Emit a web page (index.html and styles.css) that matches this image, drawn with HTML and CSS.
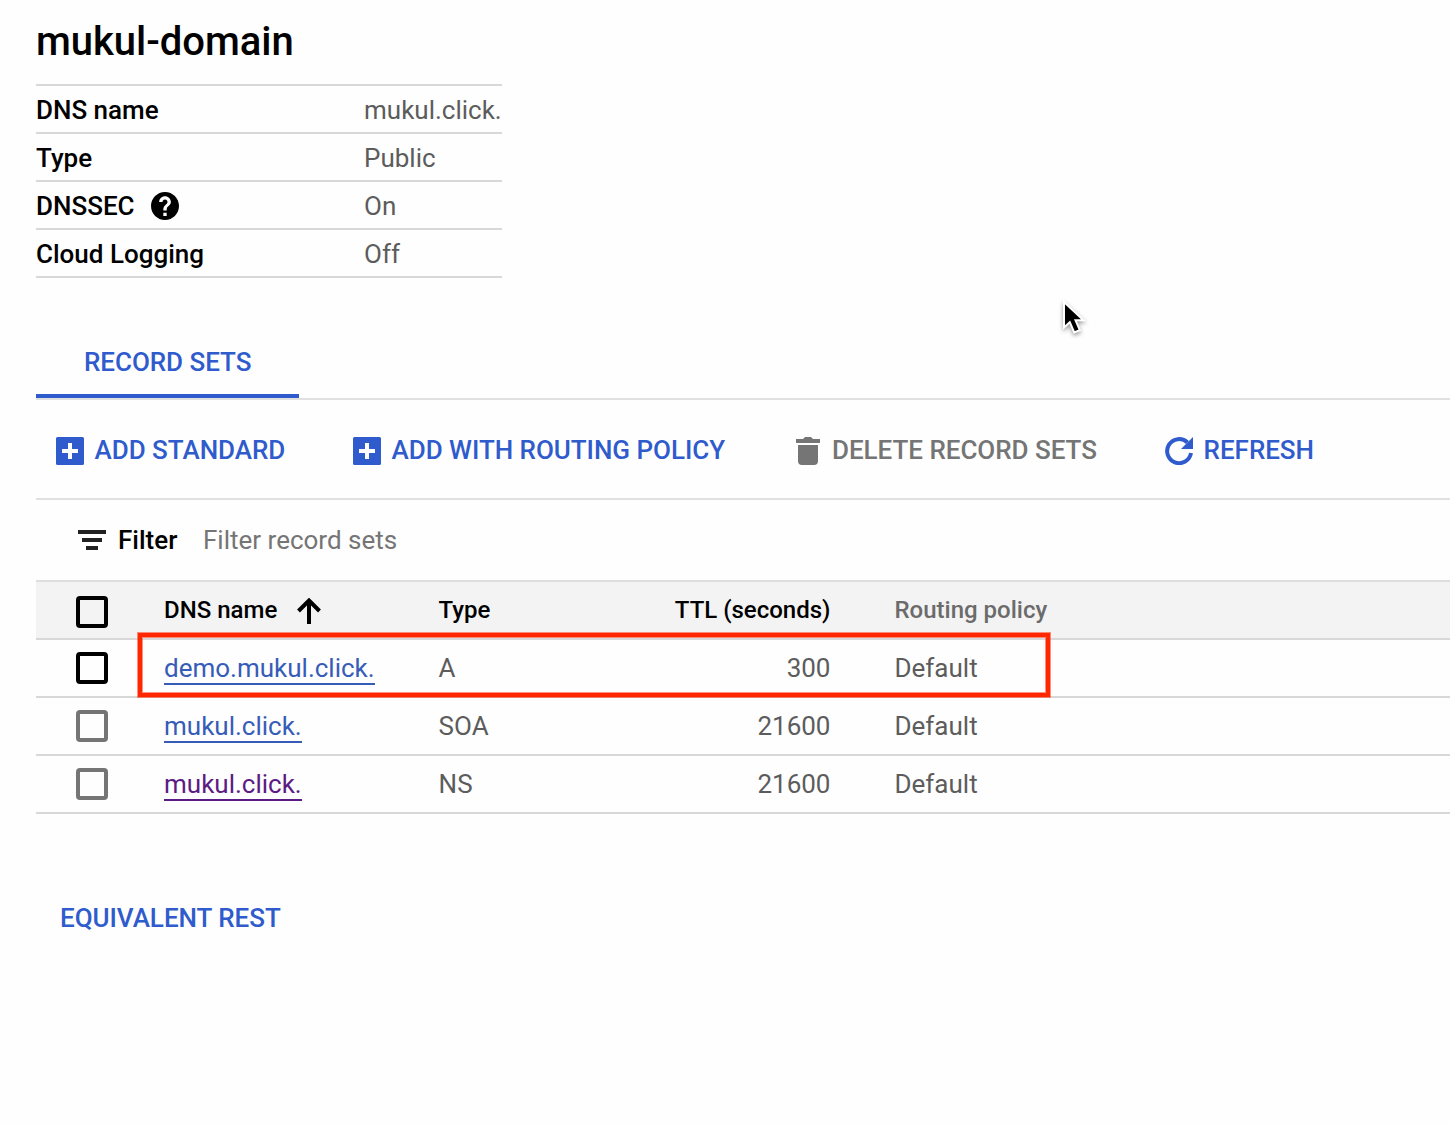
FILE: index.html
```html
<!DOCTYPE html>
<html lang="en">
<head>
<meta charset="utf-8">
<title>mukul-domain</title>
<link rel="stylesheet" href="styles.css">
</head>
<body>
<main class="page">
  <h1 class="title">mukul-domain</h1>
  <dl class="details">
    <div class="detail"><dt><span>DNS name</span></dt><dd>mukul.click.</dd></div>
    <div class="detail"><dt><span>Type</span></dt><dd>Public</dd></div>
    <div class="detail"><dt><span>DNSSEC</span>
      <svg class="help" viewBox="2 2 20 20"><path stroke="#000" stroke-width="0" d="M12 2C6.480 2 2 6.480 2 12s4.480 10 10 10 10-4.480 10-10S17.520 2 12 2zm1.200 17.200h-2.400v-2.400h2.400v2.400zm2.070-7.950l-.9.920C13.450 12.900 13.200 13.500 13.200 15.200h-2.400v-.7c0-1.100.45-2.100 1.170-2.830l1.240-1.260c.37-.36.590-.66.590-1.210 0-1-.8-1.800-1.800-1.800s-1.800.8-1.800 1.800H7.800c0-2.310 1.890-4.200 4.200-4.200s4.200 1.890 4.200 4.200c0 .88-.36 1.580-.93 2.050z"/></svg></dt><dd>On</dd></div>
    <div class="detail"><dt><span>Cloud Logging</span></dt><dd>Off</dd></div>
  </dl>

  <nav class="tabs"><a class="tab"><span>RECORD SETS</span></a></nav>

  <div class="toolbar">
    <a class="action action-standard">
      <svg class="icon" viewBox="0 0 28 28"><path fill-rule="evenodd" d="M1.500 0h25a1.500 1.500 0 0 1 1.500 1.500v25a1.500 1.500 0 0 1-1.500 1.500h-25a1.500 1.500 0 0 1-1.500-1.500v-25a1.500 1.500 0 0 1 1.500-1.500zM12 6v6H6v4h6v6h4v-6h6v-4h-6V6z"/></svg>
      <span>ADD STANDARD</span></a>
    <a class="action action-routing">
      <svg class="icon" viewBox="0 0 28 28"><path fill-rule="evenodd" d="M1.500 0h25a1.500 1.500 0 0 1 1.500 1.500v25a1.500 1.500 0 0 1-1.500 1.500h-25a1.500 1.500 0 0 1-1.500-1.500v-25a1.500 1.500 0 0 1 1.500-1.500zM12 6v6H6v4h6v6h4v-6h6v-4h-6V6z"/></svg>
      <span>ADD WITH ROUTING POLICY</span></a>
    <a class="action action-delete">
      <svg class="icon icon-trash" viewBox="0 0 24 28"><path d="M0 2h7l2-2h6l2 2h7v4H0zM2 8h20v16a4 4 0 0 1-4 4H6a4 4 0 0 1-4-4z"/></svg>
      <span>DELETE RECORD SETS</span></a>
    <a class="action action-refresh">
      <svg class="icon" viewBox="0 0 28 28"><path class="ring" d="M26 16A12 12 0 1 1 22.500 5.500"/><path d="M28 0v12H16z"/></svg>
      <span>REFRESH</span></a>
  </div>

  <div class="filter">
    <svg class="filter-icon" viewBox="0 0 28 20"><path d="M0 0h28v4H0zM4 8h20v4H4zM8 16h12v4H8z"/></svg>
    <span class="filter-label">Filter</span>
    <span class="filter-hint">Filter record sets</span>
  </div>

  <section class="records">
    <div class="row row-head">
      <i class="check"></i>
      <span class="name">DNS name <svg class="arrow" viewBox="0 0 24 26"><path d="M12 26V3M1.500 13L12 2.500 22.500 13"/></svg></span>
      <span>Type</span><span class="ttl">TTL (seconds)</span><span class="policy">Routing policy</span>
    </div>
    <div class="row"><i class="check"></i><span><a class="link">demo.mukul.click.</a></span><span>A</span><span class="ttl">300</span><span class="policy">Default</span></div>
    <div class="row"><i class="check check-soft"></i><span><a class="link">mukul.click.</a></span><span>SOA</span><span class="ttl">21600</span><span class="policy">Default</span></div>
    <div class="row"><i class="check check-soft"></i><span><a class="link visited">mukul.click.</a></span><span>NS</span><span class="ttl">21600</span><span class="policy">Default</span></div>
    <div class="highlight"></div>
  </section>

  <a class="rest">EQUIVALENT REST</a>
</main>
<svg class="cursor" viewBox="0 0 32 42"><path d="M5 4V29.500l5.800-5.300 4.400 10.300 5.600-2.300-4.300-9.900H24.500z"/></svg>
</body>
</html>
```

FILE: styles.css
```css
* { box-sizing: border-box; }
body {
  margin: 0;
  height: 1124px;
  overflow: hidden;
  background: #fefefe;
  color: #5c5c5c;
  font: 400 26px/32px Roboto, sans-serif;
}
.page { padding: 18px 0 0 36px; }
.title {
  margin: 0;
  height: 66px;
  color: #000;
  font-size: 40px;
  font-weight: 500;
  line-height: 48px;
  letter-spacing: -.04px;
}
.details {
  width: 466px;
  margin: 0;
  border-top: 2px solid #d8d8d8;
}
.detail {
  display: flex;
  align-items: center;
  height: 48px;
  padding-top: 2px;
  border-bottom: 2px solid #d8d8d8;
}
.detail dt {
  display: flex;
  align-items: center;
  gap: 16px;
  width: 328px;
  color: #000;
  font-weight: 500;
}
.detail dd { margin: 0; white-space: nowrap; }
.help { width: 28px; height: 28px; }
.tabs {
  display: flex;
  height: 74px;
  margin-top: 48px;
  border-bottom: 2px solid #e0e0e0;
}
.tab {
  width: 263px;
  padding: 20px 0 0 48px;
  border-bottom: 4px solid #2f5bcd;
  color: #2f5bcd;
  font-weight: 500;
  letter-spacing: -.04px;
  white-space: nowrap;
}
.toolbar {
  display: flex;
  height: 100px;
  padding: 34px 0 0 20px;
  border-bottom: 2px solid #e0e0e0;
}
.action {
  display: flex;
  gap: 10.600px;
  height: 32px;
  color: #2f5bcd;
  font-weight: 500;
  letter-spacing: -.03px;
  white-space: nowrap;
}
.action-standard { width: 297px; }
.action-routing { width: 443px; }
.action-delete { width: 369px; gap: 12px; color: #757575; }
.icon { width: 28px; height: 28px; margin-top: 3px; flex: none; fill: currentColor; }
.icon-trash { width: 24px; }
.ring { fill: none; stroke: currentColor; stroke-width: 4; }
.filter {
  display: flex;
  align-items: center;
  height: 80px;
  padding-left: 42px;
}
.filter-icon { width: 28px; height: 20px; margin-right: 12px; fill: #212121; }
.filter-label { width: 85px; color: #000; font-weight: 500; }
.filter-hint { color: #757575; }
.records { position: relative; border-top: 2px solid #dedede; }
.row {
  display: grid;
  grid-template-columns: 88px 274.600px 199.400px 192.500px 1fr;
  align-items: center;
  height: 58px;
  padding-left: 40px;
  border-bottom: 2px solid #d8d8d8;
}
.row-head {
  background: #f3f3f3;
  color: #000;
  font-size: 24px;
  font-weight: 500;
}
.row-head .check { position: relative; top: 2px; }
.check {
  width: 32px;
  height: 32px;
  border: 4px solid #000;
  border-radius: 4px;
}
.check-soft { border-color: #757575; }
.name { display: flex; align-items: center; gap: 20px; }
.arrow { width: 24px; height: 26px; margin-top: 2px; fill: none; stroke: #000; stroke-width: 4; }
.ttl { text-align: right; }
.policy { padding-left: 64px; }
.row-head .policy { color: #6b6b6b; }
.link {
  display: inline-block;
  height: 33px;
  margin-bottom: -1px;
  border-bottom: 2px solid #365cb8;
  color: #365cb8;
}
.visited { border-color: #5c1b84; color: #5c1b84; }
.highlight {
  position: absolute;
  left: 102px;
  top: 51px;
  width: 912px;
  height: 64px;
  border: 4px solid #ff2600;
  box-shadow: 0 0 0 1px rgba(255, 38, 0, .5), inset 0 0 0 1px rgba(255, 38, 0, .5);
}
.rest {
  display: block;
  margin: 88px 0 0 24px;
  color: #2f5bcd;
  font-weight: 500;
  letter-spacing: -.03px;
}
.cursor {
  position: absolute;
  left: 1058.500px;
  top: 297.500px;
  width: 32px;
  height: 42px;
  fill: #000;
  stroke: #fff;
  stroke-width: 2;
  filter: drop-shadow(0 2px 2px rgba(0, 0, 0, .4));
}
```
